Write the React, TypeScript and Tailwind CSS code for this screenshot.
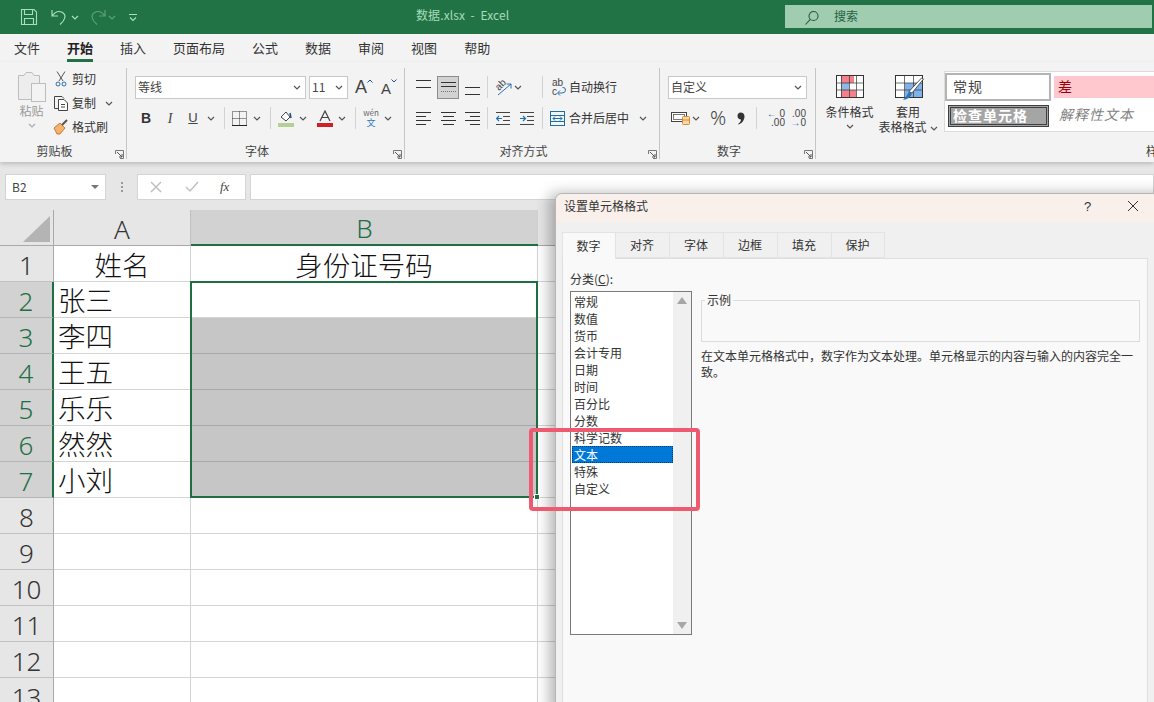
import React from "react";

const Chev = ({ c = "#555", className = "" }: { c?: string; className?: string }) => (
  <svg width="8" height="5" viewBox="0 0 8 5" className={`shrink-0 ${className}`}>
    <path d="M1 1l3 3 3-3" fill="none" stroke={c} strokeWidth="1.2" />
  </svg>
);
const Sep = ({ className = "" }: { className?: string }) => <div className={`w-px h-[22px] bg-[#d2d2d2] shrink-0 ${className}`} />;

const Lines = ({ ys, xs }: { ys: number[]; xs: [number, number][] }) => (
  <svg width="15" height="16" viewBox="0 0 15 16" className="shrink-0">
    {ys.map((y, i) => (
      <path key={i} d={`M${xs[i][0]} ${y + 0.5}H${xs[i][1]}`} stroke="#333" strokeWidth="1" />
    ))}
  </svg>
);

const Launcher = () => (
  <svg width="9" height="9" viewBox="0 0 9 9" className="absolute right-[3px] bottom-[3px]">
    <path d="M.5 4V.5H8.500V8.500H5" fill="none" stroke="#777" />
    <path d="M2 2l5 5M4 7h3V4" fill="none" stroke="#555" />
  </svg>
);

const Group = ({ w, label, children }: { w: string; label: string; children: React.ReactNode }) => (
  <div className={`${w} shrink-0 h-full flex flex-col relative`}>
    <div className="h-[78px]">{children}</div>
    <div className="h-[22px] relative flex justify-center items-start text-[12px] leading-[18px] text-[#444] pt-[2px] pr-[18px]">
      {label}
      <Launcher />
    </div>
    <div className="absolute right-0 top-[6px] bottom-[3px] w-px bg-[#c6c6c6]" />
  </div>
);

const Row = ({ children, className = "" }: { children: React.ReactNode; className?: string }) => (
  <div className={`flex items-center h-[22px] ${className}`}>{children}</div>
);

const Select = ({ w, text }: { w: string; text: string }) => (
  <div className={`${w} h-[23px] bg-white border border-[#c8c8c8] flex items-center justify-between pl-[2px] pr-[4px] text-[12px] text-[#444] shrink-0`}>
    <span>{text}</span>
    <Chev />
  </div>
);

function TitleBar() {
  return (
    <div className="h-[34px] bg-[#217346] flex items-center shrink-0">
      <svg width="18" height="18" viewBox="0 0 18 18" className="ml-[20px] shrink-0">
        <path d="M1.500 1.500H14L16.500 4V16.500H1.500Z M4.500 1.500V6.500H12.500V1.500 M4.500 16.500V10.500H13.500V16.500" fill="none" stroke="#a8e0bd" strokeWidth="1.100" />
      </svg>
      <svg width="20" height="20" viewBox="0 0 20 20" className="ml-[12px] shrink-0">
        <path d="M2 3V9H8M2.500 8.500C5 5 9 3.500 12.500 5.500C16.500 8 15.500 13 10 17.500" fill="none" stroke="#a8e0bd" strokeWidth="1.200" />
      </svg>
      <Chev c="#a8e0bd" className="ml-[1px]" />
      <svg width="20" height="20" viewBox="0 0 20 20" className="ml-[8px] shrink-0">
        <path d="M18 3V9H12M17.500 8.500C15 5 11 3.500 7.500 5.500C3.500 8 4.500 13 10 17.500" fill="none" stroke="#5f9f7b" strokeWidth="1.200" />
      </svg>
      <Chev c="#5f9f7b" className="ml-[1px]" />
      <svg width="8" height="9" viewBox="0 0 8 9" className="ml-[13px] shrink-0">
        <path d="M0 1.500H8M1 4.500l3 3 3-3" fill="none" stroke="#a8e0bd" strokeWidth="1.100" />
      </svg>
      <div className="ml-[279px] w-[100px] mb-[4px] text-[12px] text-[#a6dcb9] tracking-[0.1px] whitespace-pre shrink-0">{"数据.xlsx  -  Excel"}</div>
      <div className="ml-[269px] w-[367px] h-[23px] mb-[1px] bg-[#a0cdb0] flex items-center shrink-0">
        <svg width="16" height="16" viewBox="0 0 16 16" className="ml-[19px] mt-[2px] shrink-0">
          <circle cx="9.500" cy="6" r="4.500" fill="none" stroke="#1d5f3a" strokeWidth="1.100" />
          <path d="M6.300 9.300L1.500 14.500" stroke="#1d5f3a" strokeWidth="1.100" />
        </svg>
        <span className="ml-[14px] text-[12px] text-[#24613f] mb-[2px]">搜索</span>
      </div>
    </div>
  );
}

function Tabs() {
  const t = ["文件", "开始", "插入", "页面布局", "公式", "数据", "审阅", "视图", "帮助"];
  return (
    <div className="h-[28px] bg-[#f3f3f3] flex pl-[14px] gap-[27px] shrink-0 text-[13px] text-[#333]">
      {t.map((x) => (
        <div key={x} className={`h-full flex items-center relative ${x === "开始" ? "font-bold text-[#222]" : ""}`}>
          {x}
          {x === "开始" && <div className="absolute left-0 right-0 bottom-0 h-[3px] bg-[#217346]" />}
        </div>
      ))}
    </div>
  );
}

function Clipboard() {
  return (
    <Group w="w-[127px]" label="剪贴板">
      <div className="flex pt-[5px]">
        <div className="w-[57px] shrink-0 flex flex-col items-center pl-[6px]">
          <svg width="30" height="32" viewBox="0 0 30 32" className="mt-[4px]">
            <path d="M1.500 4.500H7L9 1.500H15L17 4.500H22.500V28.500H1.500Z" fill="#ededed" stroke="#bdbdbd" />
            <rect x="14.500" y="12.500" width="14" height="18" fill="#f3f3f3" stroke="#bdbdbd" />
          </svg>
          <div className="text-[12px] leading-[14px] text-[#9a9a9a] mt-[1px]">粘贴</div>
          <Chev c="#aaa" className="mt-[5px]" />
        </div>
        <div className="flex flex-col text-[12px] text-[#333]">
          <div className="h-[24px] flex items-center">
            <svg width="12" height="16" viewBox="0 0 12 16" className="-ml-[2px] shrink-0">
              <path d="M2 .5L8 10M10 .5L4 10" stroke="#555" fill="none" />
              <circle cx="3" cy="13" r="2" fill="none" stroke="#2a6fb0" />
              <circle cx="9" cy="13" r="2" fill="none" stroke="#2a6fb0" />
            </svg>
            <span className="ml-[5px]">剪切</span>
          </div>
          <div className="h-[24px] flex items-center">
            <svg width="16" height="16" viewBox="0 0 16 16" className="-ml-[4px] shrink-0">
              <path d="M5.500 13.500H1.500V1.500H9L11 3.500" fill="none" stroke="#444" />
              <path d="M5.500 4.500H11L14.500 8V15.500H5.500ZM8 9.500H12M8 12H12" fill="#fff" stroke="#444" />
            </svg>
            <span className="ml-[3px]">复制</span>
            <Chev className="ml-[9px]" />
          </div>
          <div className="h-[24px] flex items-center">
            <svg width="16" height="16" viewBox="0 0 16 16" className="-ml-[4px] shrink-0">
              <path d="M1 9L7 4L12 9L7 15H4Z" fill="#f5b26b" stroke="#b5652a" strokeWidth=".8" />
              <path d="M9 6L14 1" stroke="#555" strokeWidth="2" />
            </svg>
            <span className="ml-[3px]">格式刷</span>
          </div>
        </div>
      </div>
    </Group>
  );
}

function Font() {
  return (
    <Group w="w-[278px]" label="字体">
      <Row className="mt-[14px]">
        <Select w="w-[171px] ml-[8px]" text="等线" />
        <Select w="w-[39px] ml-[3px]" text="11" />
        <div className="ml-[7px] w-[18px] h-[18px] flex items-end text-[18px] text-[#444] relative leading-none font-['Liberation_Sans',sans-serif]">
          A
          <svg width="6" height="4" viewBox="0 0 6 4" className="absolute top-[1px] right-0"><path d="M.5 3.500L3 1l2.500 2.500" fill="none" stroke="#1f4e8c" /></svg>
        </div>
        <div className="ml-[7px] w-[18px] h-[18px] flex items-end text-[15px] text-[#444] relative leading-none font-['Liberation_Sans',sans-serif]">
          <span className="ml-[1px]">A</span>
          <svg width="6" height="4" viewBox="0 0 6 4" className="absolute top-[1px] right-[1px]"><path d="M.5 .5L3 3l2.500-2.500" fill="none" stroke="#1f4e8c" /></svg>
        </div>
      </Row>
      <Row className="mt-[9px] text-[#444]">
        <div className="ml-[12px] w-[14px] text-center text-[14px] font-bold text-[#333] font-['Liberation_Sans',sans-serif]">B</div>
        <div className="ml-[10px] w-[14px] text-center text-[14px] italic font-['Liberation_Serif',serif]">I</div>
        <div className="ml-[9px] w-[14px] text-center text-[13px] underline font-['Liberation_Sans',sans-serif]">U</div>
        <Chev className="ml-[7px]" />
        <Sep className="ml-[9px]" />
        <svg width="15" height="15" viewBox="0 0 15 15" className="ml-[7px] shrink-0">
          <path d="M.5 .5H14.500V14.500H.5ZM7.500 .5V14.500M.5 7.500H14.500" fill="none" stroke="#333" strokeDasharray="1 1" />
          <path d="M0 14.500H15" stroke="#222" />
        </svg>
        <Chev className="ml-[6px]" />
        <Sep className="ml-[9px]" />
        <svg width="16" height="17" viewBox="0 0 16 17" className="ml-[7px] shrink-0">
          <path d="M3 7L8 2L12 7L8 11Z" fill="#fff" stroke="#444" />
          <path d="M12 3l1 5" stroke="#1f4e8c" strokeWidth="1.500" />
          <rect x="0" y="13" width="16" height="4" fill="#b5cf95" />
        </svg>
        <Chev className="ml-[5px]" />
        <svg width="16" height="17" viewBox="0 0 16 17" className="ml-[10px] shrink-0">
          <path d="M3 11L8 1L13 11M5 7.500H11" fill="none" stroke="#444" strokeWidth="1.200" />
          <rect x="0" y="13" width="16" height="4" fill="#d01f25" />
        </svg>
        <Chev className="ml-[5px]" />
        <Sep className="ml-[9px]" />
        <div className="ml-[8px] w-[14px] h-[22px] flex flex-col items-center pt-[1px]">
          <span className="text-[8px] leading-[10px] text-[#666]">wén</span>
          <span className="text-[9px] leading-[10px] text-[#2a7ab8]">文</span>
        </div>
        <Chev className="ml-[6px]" />
      </Row>
    </Group>
  );
}

const l = (a: number, b: number): [number, number] => [a, b];

function Align() {
  return (
    <Group w="w-[255px]" label="对齐方式">
      <Row className="mt-[14px]">
        <div className="ml-[11px]"><Lines ys={[1, 8]} xs={[l(0, 15), l(0, 15)]} /></div>
        <div className="ml-[6px] w-[22px] h-[23px] bg-[#d2d2d2] border border-[#8c8c8c] flex items-center justify-center shrink-0">
          <svg width="15" height="16" viewBox="0 0 15 16" className="shrink-0">
            <path d="M0 3.500H15M0 7.500H15" stroke="#333" />
            <path d="M0 12.500H15" stroke="#777" strokeDasharray="1 1" />
          </svg>
        </div>
        <div className="ml-[6px]"><Lines ys={[8, 15]} xs={[l(0, 15), l(0, 15)]} /></div>
        <Sep className="ml-[7px]" />
        <svg width="16" height="17" viewBox="0 0 16 17" className="ml-[8px] shrink-0">
          <text x="0" y="9" fontSize="10" fill="#444" fontFamily="Liberation Sans, sans-serif" transform="rotate(-45 5 7)">ab</text>
          <path d="M2 16L15 5M15 5H10.500M15 5V9.500" fill="none" stroke="#2a6fb0" />
        </svg>
        <Chev className="ml-[2px]" />
        <Sep className="ml-[20px]" />
        <svg width="14" height="18" viewBox="0 0 14 18" className="ml-[9px] shrink-0">
          <text x="0" y="8" fontSize="10" fill="#444" fontFamily="Liberation Sans, sans-serif">ab</text>
          <text x="0" y="17" fontSize="10" fill="#444" fontFamily="Liberation Sans, sans-serif">c</text>
          <path d="M6 15H10Q13.500 15 13.500 12T10.500 9.500M8 12.500L5.500 15L8 17.500" fill="none" stroke="#2a6fb0" />
        </svg>
        <span className="ml-[3px] text-[12px] text-[#333]">自动换行</span>
      </Row>
      <Row className="mt-[9px]">
        <div className="ml-[11px]"><Lines ys={[2, 6, 10, 14]} xs={[l(0, 15), l(0, 10), l(0, 15), l(0, 10)]} /></div>
        <div className="ml-[10px]"><Lines ys={[2, 6, 10, 14]} xs={[l(0, 15), l(2, 13), l(0, 15), l(2, 13)]} /></div>
        <div className="ml-[9px]"><Lines ys={[2, 6, 10, 14]} xs={[l(0, 15), l(5, 15), l(0, 15), l(5, 15)]} /></div>
        <Sep className="ml-[7px]" />
        <svg width="14" height="15" viewBox="0 0 14 15" className="ml-[8px] shrink-0">
          <path d="M0 1.500H14M7 5.500H14M7 9.500H14M0 13.500H14" stroke="#444" />
          <path d="M6 7.500H0.500M3 5l-2.500 2.500L3 10" fill="none" stroke="#1f6fb0" strokeWidth="1.200" />
        </svg>
        <svg width="14" height="15" viewBox="0 0 14 15" className="ml-[10px] shrink-0">
          <path d="M0 1.500H14M7 5.500H14M7 9.500H14M0 13.500H14" stroke="#444" />
          <path d="M0 7.500H5.500M3 5l2.500 2.500L3 10" fill="none" stroke="#1f6fb0" strokeWidth="1.200" />
        </svg>
        <Sep className="ml-[8px]" />
        <svg width="15" height="15" viewBox="0 0 15 15" className="ml-[7px] shrink-0">
          <rect x=".5" y=".5" width="14" height="14" fill="#eef5fb" stroke="#1f6e9c" />
          <path d="M.5 4.500H14.500M.5 10.500H14.500" stroke="#1f6e9c" />
          <path d="M3 7.500H12M5 5.500l-2 2 2 2M10 5.500l2 2-2 2" fill="none" stroke="#1f6e9c" />
        </svg>
        <span className="ml-[4px] w-[60px] text-[12px] text-[#333] shrink-0">合并后居中</span>
        <Chev className="ml-[10px]" />
      </Row>
    </Group>
  );
}

function NumberG() {
  return (
    <Group w="w-[156px]" label="数字">
      <Row className="mt-[14px]">
        <Select w="w-[139px] ml-[8px]" text="自定义" />
      </Row>
      <Row className="mt-[9px]">
        <svg width="21" height="16" viewBox="0 0 21 16" className="ml-[11px] shrink-0">
          <rect x=".5" y="2.500" width="15" height="9" fill="#fff" stroke="#444" />
          <rect x="2.500" y="4.500" width="11" height="5" fill="none" stroke="#444" strokeWidth=".7" />
          <rect x="11.500" y="6.500" width="7" height="8" rx="1" fill="#f8d9ae" stroke="#d98a2b" />
          <path d="M11.500 10H18.500" stroke="#d98a2b" />
        </svg>
        <Chev />
        <span className="ml-[10px] w-[16px] text-[20px] leading-none text-[#444] font-light font-['Noto_Sans',sans-serif] shrink-0">%</span>
        <svg width="8" height="13" viewBox="0 0 8 13" className="ml-[11px] shrink-0">
          <path d="M3.500 0.500C6 0.500 7.500 2 7.500 4.500C7.500 8 5 11.500 1.500 12.500L1 12C3 10.500 4 9 4 7.500C2 7.500 .5 6 .5 4C.5 2 1.800 .5 3.500 .5Z" fill="#333" />
        </svg>
        <Sep className="ml-[11px]" />
        <div className="ml-[7px] w-[21px] flex flex-col text-[10px] leading-[9px] text-[#444] items-end font-['Liberation_Sans',sans-serif] shrink-0">
          <span><span className="text-[#2a6fb0]">← </span>0</span>
          <span>.00</span>
        </div>
        <div className="ml-[4px] w-[17px] flex flex-col text-[10px] leading-[9px] text-[#444] items-end font-['Liberation_Sans',sans-serif] shrink-0">
          <span>.00</span>
          <span><span className="text-[#2a6fb0]">→</span>0</span>
        </div>
      </Row>
    </Group>
  );
}

function Styles() {
  return (
    <div className="flex-1 h-full relative min-w-0">
      <div className="h-[78px] flex">
        <div className="ml-[9px] w-[49px] flex flex-col items-center pt-[13px] text-[12px] leading-[15px] text-[#333] shrink-0">
          <svg width="28" height="23" viewBox="0 0 28 23" className="shrink-0">
            <rect x=".5" y=".5" width="27" height="22" fill="#fff" stroke="#333" />
            <path d="M5 1H18V8H18V15H20V22H5Z" fill="#f4808c" />
            <rect x="5" y="8" width="8" height="7" fill="#8db9e6" />
            <rect x="13" y="8" width="5" height="7" fill="#fff" />
            <path d="M5.500 1V22M13.500 1V22M20.500 1V22M1 8H27M1 15H27" stroke="#333" strokeWidth=".7" />
          </svg>
          <div className="mt-[6px] whitespace-nowrap">条件格式</div>
          <Chev className="mt-[5px]" />
        </div>
        <div className="ml-[5px] w-[58px] flex flex-col items-center pt-[13px] text-[12px] leading-[15px] text-[#333] shrink-0">
          <svg width="30" height="27" viewBox="0 0 30 27" className="shrink-0 -mb-[4px] ml-[4px]">
            <rect x=".5" y=".5" width="27" height="22" fill="#fff" stroke="#333" />
            <rect x="10" y="8" width="17" height="14" fill="#7fb2ea" />
            <path d="M9.500 1V22M18.500 1V22M1 8H27M1 15H27" stroke="#333" strokeWidth=".7" />
            <path d="M28.500 4L17 18L14 16.500L26.500 3Z" fill="#fff" stroke="#333" strokeWidth=".8" />
            <path d="M14 16.500L17 18.500Q15 24 8 25Q12 21 14 16.500Z" fill="#2f75b5" />
          </svg>
          <div className="mt-[6px]">套用</div>
          <div className="whitespace-nowrap">表格格式<Chev className="inline ml-[3px] align-middle" /></div>
        </div>
        <div className="ml-[7px] mt-[9px] flex-1 h-[61px] bg-white border border-[#dcdcdc] border-r-0 flex flex-col">
          <div className="flex mt-[1px]">
            <div className="w-[106px] h-[28px] border-2 border-[#b4b4b4] flex items-center pl-[6px] pb-[2px] text-[14px] text-[#444] shrink-0 tracking-[1px]">常规</div>
            <div className="ml-[3px] flex-1 h-[22px] mt-[3px] bg-[#ffc7ce] text-[#9c0006] text-[14px] flex items-center pl-[4px] pb-[2px]">差</div>
          </div>
          <div className="flex mt-[3px] items-center">
            <div className="ml-[3px] w-[101px] h-[22px] bg-[#a5a5a5] border-[3px] border-double border-[#3f3f3f] flex items-center pl-[2px] pb-[1px] text-[14px] font-bold text-white shrink-0 tracking-[1px] whitespace-nowrap overflow-hidden">检查单元格</div>
            <div className="ml-[10px] mb-[2px] text-[14px] italic text-[#7f7f7f] tracking-[1px] whitespace-nowrap">解释性文本</div>
          </div>
        </div>
      </div>
      <div className="h-[22px] text-[12px] leading-[18px] text-[#444] pt-[2px] pl-[330px] whitespace-nowrap">样</div>
    </div>
  );
}

function Ribbon() {
  return (
    <div className="h-[100px] bg-[#f3f3f3] flex shrink-0 shadow-[0_2px_4px_rgba(0,0,0,0.18)] relative z-10">
      <Clipboard />
      <Font />
      <Align />
      <NumberG />
      <Styles />
    </div>
  );
}

function FormulaBar() {
  return (
    <div className="h-[48px] bg-[#e6e6e6] flex pt-[12px] pl-[5px] shrink-0">
      <div className="w-[101px] h-[26px] bg-white border border-[#d4d4d4] flex items-center justify-between pl-[6px] pr-[6px] text-[12px] text-[#444] shrink-0">
        <span>B2</span>
        <svg width="8" height="4" viewBox="0 0 8 4"><path d="M0 0H8L4 4Z" fill="#777" /></svg>
      </div>
      <div className="w-[31px] flex flex-col items-center justify-center gap-[2px] h-[26px] shrink-0">
        {[0, 1, 2].map((i) => <div key={i} className="w-[2px] h-[2px] bg-[#999]" />)}
      </div>
      <div className="w-[109px] h-[26px] bg-white border border-[#d4d4d4] flex items-center shrink-0">
        <svg width="12" height="12" viewBox="0 0 12 12" className="ml-[12px]"><path d="M1 1l10 10M11 1L1 11" stroke="#c0c0c0" strokeWidth="1.500" /></svg>
        <svg width="14" height="12" viewBox="0 0 14 12" className="ml-[23px]"><path d="M1 6l4 4 8-9" fill="none" stroke="#c0c0c0" strokeWidth="1.500" /></svg>
        <span className="ml-[21px] text-[13px] italic text-[#444] font-['Liberation_Serif',serif]">fx</span>
      </div>
      <div className="ml-[4px] flex-1 h-[26px] bg-white border border-[#d4d4d4]" />
    </div>
  );
}

const names = ["姓名", "张三", "李四", "王五", "乐乐", "然然", "小刘"];

function Sheet() {
  const rows = Array.from({ length: 13 }, (_, i) => i + 1);
  const cellText = "font-light text-[27.500px] text-[#111] leading-none";
  const hdrText = "font-['Noto_Sans',sans-serif] font-light text-[26px] leading-none";
  return (
    <div className="flex-1 min-h-0 relative bg-white overflow-hidden">
      <div className="grid grid-cols-[54px_137px_347px_1fr] grid-rows-[36px_repeat(13,36px)]">
        <div className="bg-[#e6e6e6] border-r border-b border-[#a9a9a9] flex items-end justify-end pr-[3px] pb-[3px]">
          <svg width="27" height="26" viewBox="0 0 27 26"><path d="M27 0V26H0Z" fill="#b4b4b4" /></svg>
        </div>
        <div className={`bg-[#e6e6e6] border-r border-[#c0c0c0] border-b border-b-[#a9a9a9] flex items-center justify-center text-[#333] pt-[2px] ${hdrText}`}>A</div>
        <div className={`bg-[#d2d2d2] border-b-2 border-[#1f6f42] flex items-center justify-center text-[#1f6f42] pt-[2px] ${hdrText}`}>B</div>
        <div className="bg-[#e6e6e6] border-b border-[#a9a9a9]" />
        {rows.map((r) => {
          const sel = r >= 2 && r <= 7;
          const grey = r >= 3 && r <= 7;
          return (
            <React.Fragment key={r}>
              <div className={`border-b flex items-center justify-center pt-[2px] ${hdrText} ${sel ? "bg-[#d2d2d2] text-[#1f6f42] border-[#b5b5b5] border-r-2 border-r-[#1f6f42]" : "bg-[#e6e6e6] text-[#333] border-[#c0c0c0] border-r border-r-[#a9a9a9]"}`}>{r}</div>
              <div className={`border-r border-b border-[#d4d4d4] flex items-center ${r === 1 ? "justify-center pt-[3px]" : "pl-[4px] pt-[1px]"} ${cellText}`}>{names[r - 1] ?? ""}</div>
              <div className={`border-r border-b flex items-center justify-center ${r === 1 ? "pt-[3px]" : "pt-[1px]"} ${grey ? "bg-[#c6c6c6] border-[#a8a8a8]" : "border-[#d4d4d4]"} ${cellText}`}>{r === 1 ? "身份证号码" : ""}</div>
              <div className="border-b border-[#d4d4d4]" />
            </React.Fragment>
          );
        })}
      </div>
      <div className="absolute left-[190px] top-[71px] w-[348px] h-[217px] border-2 border-[#1f6f42] pointer-events-none" />
      <div className="absolute left-[534px] top-[284px] w-[6px] h-[6px] bg-[#1f6f42] border border-white" />
    </div>
  );
}

const cats = ["常规", "数值", "货币", "会计专用", "日期", "时间", "百分比", "分数", "科学记数", "文本", "特殊", "自定义"];
const dTabs = ["数字", "对齐", "字体", "边框", "填充", "保护"];

function Dialog() {
  return (
    <div className="absolute left-[555px] top-[193px] w-[620px] h-[520px] bg-[#f0f0f0] rounded-t-[7px] border border-[#b5b5b5] shadow-[-6px_0_14px_rgba(0,0,0,0.28)] flex flex-col text-[12px] text-[#333]">
      <div className="h-[28px] bg-[#f9f0ec] rounded-t-[7px] flex items-center pl-[8px] pb-[5px] shrink-0 relative">
        <span>设置单元格格式</span>
        <span className="absolute left-[528px] top-[3px] text-[13px] font-['Liberation_Sans',sans-serif]">?</span>
        <svg width="12" height="12" viewBox="0 0 12 12" className="absolute left-[571px] top-[6px]">
          <path d="M1 1l10 10M11 1L1 11" stroke="#333" strokeWidth="1" />
        </svg>
      </div>
      <div className="h-[36px] pl-[6px] flex items-end shrink-0 relative z-10">
        {dTabs.map((t, i) => (
          <div key={t} className={`flex items-center justify-center h-[26px] border-t border-r border-[#e3e3e3] pr-[1px] ${i === 5 ? "w-[53px]" : "w-[54px]"} ${i === 0 ? "bg-[#f9f9f9] border-l h-[27px] -mb-[1px]" : "bg-[#f0f0f0] border-b"}`}>{t}</div>
        ))}
      </div>
      <div className="ml-[6px] w-[586px] flex-1 bg-[#f9f9f9] border border-[#dfdfdf] flex pl-[7px] pt-[12px]">
        <div className="w-[122px] shrink-0">
          <div className="leading-[16px]">分类(<span className="underline">C</span>):</div>
          <div className="mt-[4px] w-[122px] h-[344px] bg-white border border-[#7a7a7a] flex pl-[1px]">
            <div className="w-[101px] pt-[1px] shrink-0">
              {cats.map((c) => (
                <div key={c} className={`h-[17px] leading-[17px] pl-[2px] ${c === "文本" ? "bg-[#0078d7] text-white outline-1 outline-dotted -outline-offset-1 outline-[#003e78]" : ""}`}>{c}</div>
              ))}
            </div>
            <div className="flex-1 bg-[#f0f0f0] flex flex-col items-center justify-between py-[5px]">
              <svg width="10" height="7" viewBox="0 0 10 7"><path d="M5 0L10 7H0Z" fill="#a6a6a6" /></svg>
              <svg width="10" height="7" viewBox="0 0 10 7"><path d="M0 0H10L5 7Z" fill="#a6a6a6" /></svg>
            </div>
          </div>
        </div>
        <div className="ml-[9px] w-[439px] shrink-0 pt-[29px]">
          <div className="h-[42px] border border-[#dcdcdc] relative">
            <span className="absolute left-[3px] -top-[9px] bg-[#f9f9f9] px-[2px] leading-[16px]">示例</span>
          </div>
          <div className="mt-[6px] w-[436px] leading-[16px]">在文本单元格格式中，数字作为文本处理。单元格显示的内容与输入的内容完全一致。</div>
        </div>
      </div>
    </div>
  );
}

export default function App() {
  return (
    <div className="w-[1154px] h-[702px] overflow-hidden relative flex flex-col bg-white font-['Noto_Sans_CJK_SC',sans-serif]">
      <TitleBar />
      <Tabs />
      <Ribbon />
      <FormulaBar />
      <Sheet />
      <Dialog />
      <div className="absolute left-[529px] top-[428px] w-[171px] h-[83px] border-[4px] border-[#ee5a6f] rounded-[4px] pointer-events-none" />
    </div>
  );
}
